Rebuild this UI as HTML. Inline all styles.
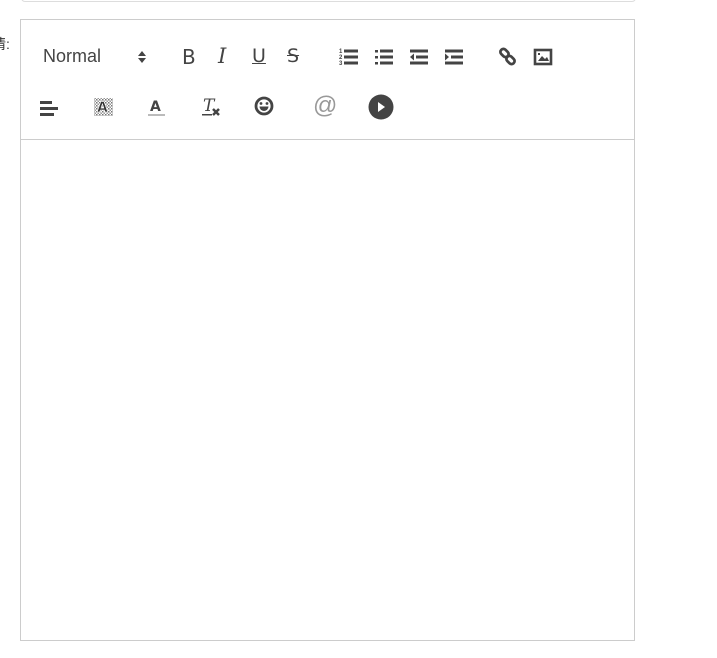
<!DOCTYPE html>
<html><head><style>
body{margin:0;width:717px;height:658px;background:#fff;position:relative;overflow:hidden;font-family:"Liberation Sans","Noto Sans CJK SC",sans-serif}
.top{position:absolute;left:21px;top:-10px;width:613px;height:10px;border:1px solid #ddd;border-radius:4px}
.lbl{position:absolute;left:-8px;top:34px;font-size:14px;color:#333}
.ed{position:absolute;left:20px;top:19px;width:613px;height:620px;border:1px solid #ccc}
.tb{height:119px;border-bottom:1px solid #ccc;position:relative}
.i{position:absolute}
svg{position:absolute}
</style></head><body>
<div class="top"></div>
<div class="lbl">情:</div>
<div class="ed"><div class="tb">
<div class="i" style="left:22px;top:26px;font-size:18px;color:#444">Normal</div>
<svg style="left:114px;top:29px" width="14" height="16"><path d="M3 7L7 2L11 7Z M3 9L7 14L11 9Z" fill="#444"/></svg>
<div class="i" style="left:161px;top:25px;font-size:20px;color:#444;font-family:'DejaVu Sans'">B</div>
<div class="i" style="left:197px;top:24px;font-size:21px;color:#444;font-style:italic;font-family:'DejaVu Serif'">I</div>
<div class="i" style="left:231px;top:25px;font-size:19px;color:#444;text-decoration:underline;font-family:'DejaVu Sans'">U</div>
<div class="i" style="left:266px;top:25px;font-size:19px;color:#444;text-decoration:line-through;font-family:'DejaVu Sans'">S</div>
<svg style="left:318px;top:27px" width="20" height="20" fill="#444"><text x="0" y="6" font-size="6" font-weight="bold">1</text><text x="0" y="12" font-size="6" font-weight="bold">2</text><text x="0" y="18" font-size="6" font-weight="bold">3</text><rect x="5" y="2.5" width="14" height="3"/><rect x="5" y="8.5" width="14" height="3"/><rect x="5" y="14.5" width="14" height="3"/></svg>
<svg style="left:353px;top:27px" width="20" height="20" fill="#444"><rect x="1" y="3" width="3" height="2.5"/><rect x="1" y="9" width="3" height="2.5"/><rect x="1" y="15" width="3" height="2.5"/><rect x="6" y="2.5" width="13" height="3"/><rect x="6" y="8.5" width="13" height="3"/><rect x="6" y="14.5" width="13" height="3"/></svg>
<svg style="left:388px;top:27px" width="20" height="20" fill="#444"><rect x="1" y="2.5" width="18" height="3"/><rect x="7" y="8.5" width="12" height="3"/><rect x="1" y="14.5" width="18" height="3"/><path d="M1 10L5 6.5V13.5Z"/></svg>
<svg style="left:423px;top:27px" width="20" height="20" fill="#444"><rect x="1" y="2.5" width="18" height="3"/><rect x="7" y="8.5" width="12" height="3"/><rect x="1" y="14.5" width="18" height="3"/><path d="M5 10L1 6.5V13.5Z"/></svg>
<svg style="left:477px;top:27px" width="20" height="20" fill="none" stroke="#444" stroke-width="2.8"><rect x="2" y="3" width="9" height="6" rx="3" transform="rotate(45 6.5 6)"/><rect x="8" y="10" width="9" height="6" rx="3" transform="rotate(45 12.5 13)"/></svg>
<svg style="left:512px;top:27px" width="20" height="20"><rect x="2" y="3" width="16" height="14" fill="none" stroke="#444" stroke-width="2.6"/><path d="M5 14L9 9L12 12L14 10L16 14Z" fill="#444"/><rect x="5" y="6" width="2" height="2" fill="#444"/></svg>
<svg style="left:18px;top:78px" width="20" height="20" fill="#444"><rect x="1" y="3" width="12" height="3"/><rect x="1" y="9" width="18" height="3"/><rect x="1" y="15" width="14" height="3"/></svg>
<svg style="left:72px;top:76px" width="22" height="22"><defs><pattern id="h" width="3" height="3" patternUnits="userSpaceOnUse"><rect width="1.5" height="1.5" fill="#777"/><rect x="1.5" y="1.5" width="1.5" height="1.5" fill="#999"/></pattern></defs><rect x="1" y="2" width="19" height="18" fill="url(#h)"/><text x="4" y="16" font-size="14" font-weight="bold" fill="#333" font-family="DejaVu Sans" stroke="#fff" stroke-width=".6">A</text></svg>
<svg style="left:126px;top:76px" width="20" height="22"><text x="3" y="15" font-size="14" font-weight="bold" fill="#444" font-family="DejaVu Sans">A</text><rect x="1" y="18" width="17" height="2" fill="#bbb"/></svg>
<svg style="left:180px;top:76px" width="22" height="22" fill="#444"><text x="2" y="15" font-size="17" font-style="italic" font-family="DejaVu Serif">T</text><rect x="1" y="18" width="10" height="1.5"/><path d="M12 13L18 19M18 13L12 19" stroke="#444" stroke-width="2.5"/></svg>
<svg style="left:232px;top:75px" width="22" height="22"><circle cx="11" cy="11" r="8" fill="none" stroke="#444" stroke-width="2.8"/><circle cx="8" cy="8.5" r="1.4" fill="#444"/><circle cx="14" cy="8.5" r="1.4" fill="#444"/><path d="M6.5 11.5H15.5A4.5 4.5 0 0 1 6.5 11.5Z" fill="#444"/></svg>
<div class="i" style="left:292px;top:72px;font-size:24px;color:#999">@</div>
<svg style="left:347px;top:74px" width="26" height="26"><circle cx="13" cy="13" r="12.5" fill="#444"/><path d="M10 8L17 13L10 18Z" fill="#fff"/></svg>
</div></div>
</body></html>
